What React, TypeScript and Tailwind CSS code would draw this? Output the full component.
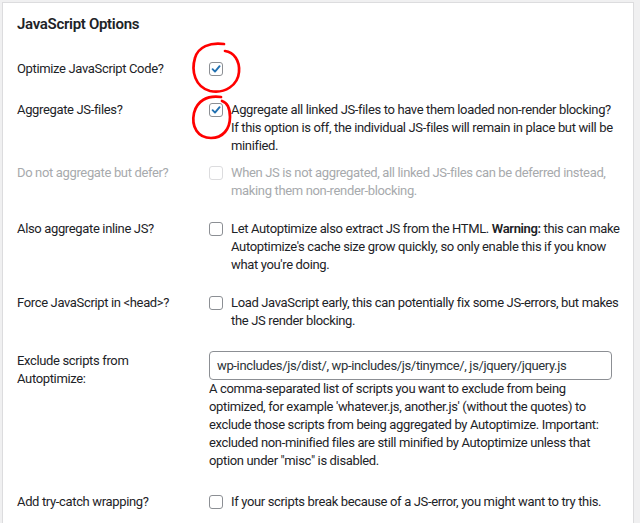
import React from "react";

function Box({ checked = false, disabled = false }: { checked?: boolean; disabled?: boolean }) {
  return (
    <span
      className={
        "mt-[2px] flex h-[14px] w-[14px] shrink-0 items-center justify-center rounded-[3px] border bg-white " +
        (disabled ? "border-[#dcdcde]" : "border-[#8c8f94]")
      }
    >
      {checked && (
        <svg width="10" height="10" viewBox="0 0 10 10">
          <path d="M1.6 5.2 L4 7.6 L8.6 2.2" fill="none" stroke="#2271b1" strokeWidth="1.9" strokeLinecap="round" strokeLinejoin="round" />
        </svg>
      )}
    </span>
  );
}

function Lines({ lines }: { lines: React.ReactNode[] }) {
  return (
    <div className="whitespace-nowrap">
      {lines.map((l, i) => (
        <div key={i}>{l}</div>
      ))}
    </div>
  );
}

export default function App() {
  return (
    <div className="relative h-[523px] w-[640px] overflow-hidden bg-[#f0f0f1] pl-[2px] pr-[6px] pt-[2px] font-['Roboto',sans-serif] text-[13px] leading-[18px] tracking-[-0.35px] text-[#1d2327]">
      <div className="h-[540px] border border-[#dcdcde] bg-white pl-[14px]">
        <h2 className="pt-[11px] text-[15px] font-semibold leading-[20px] tracking-[-0.3px]">JavaScript Options</h2>

        <div className="mt-[26px] flex">
          <div className="w-[192px] shrink-0">Optimize JavaScript Code?</div>
          <Box checked />
        </div>

        <div className="mt-[23px] flex">
          <div className="w-[192px] shrink-0">Aggregate JS-files?</div>
          <div className="flex gap-[8px]">
            <Box checked />
            <Lines
              lines={[
                "Aggregate all linked JS-files to have them loaded non-render blocking?",
                "If this option is off, the individual JS-files will remain in place but will be",
                "minified.",
              ]}
            />
          </div>
        </div>

        <div className="mt-[9px] flex text-[#a7aaad]">
          <div className="w-[192px] shrink-0">Do not aggregate but defer?</div>
          <div className="flex gap-[8px]">
            <Box disabled />
            <Lines
              lines={[
                "When JS is not aggregated, all linked JS-files can be deferred instead,",
                "making them non-render-blocking.",
              ]}
            />
          </div>
        </div>

        <div className="mt-[20px] flex">
          <div className="w-[192px] shrink-0">Also aggregate inline JS?</div>
          <div className="flex gap-[8px]">
            <Box />
            <Lines
              lines={[
                <>
                  Let Autoptimize also extract JS from the HTML. <span className="font-semibold">Warning:</span> this can make
                </>,
                "Autoptimize's cache size grow quickly, so only enable this if you know",
                "what you're doing.",
              ]}
            />
          </div>
        </div>

        <div className="mt-[20px] flex">
          <div className="w-[192px] shrink-0">Force JavaScript in &lt;head&gt;?</div>
          <div className="flex gap-[8px]">
            <Box />
            <Lines
              lines={[
                "Load JavaScript early, this can potentially fix some JS-errors, but makes",
                "the JS render blocking.",
              ]}
            />
          </div>
        </div>

        <div className="mt-[21px] flex">
          <div className="w-[192px] shrink-0 pt-[1px]">
            <div>Exclude scripts from</div>
            <div>Autoptimize:</div>
          </div>
          <div className="w-[403px] shrink-0">
            <div className="flex h-[29px] items-center rounded-[4px] border border-[#8c8f94] px-[7px] text-[#2c3338]">
              wp-includes/js/dist/, wp-includes/js/tinymce/, js/jquery/jquery.js
            </div>
            <Lines
              lines={[
                "A comma-separated list of scripts you want to exclude from being",
                "optimized, for example 'whatever.js, another.js' (without the quotes) to",
                "exclude those scripts from being aggregated by Autoptimize. Important:",
                "excluded non-minified files are still minified by Autoptimize unless that",
                'option under "misc" is disabled.',
              ]}
            />
          </div>
        </div>

        <div className="mt-[23px] flex">
          <div className="w-[192px] shrink-0">Add try-catch wrapping?</div>
          <div className="flex gap-[8px]">
            <Box />
            <Lines lines={["If your scripts break because of a JS-error, you might want to try this."]} />
          </div>
        </div>
      </div>

      <svg className="pointer-events-none absolute left-0 top-0" width="640" height="523" viewBox="0 0 640 523">
        <path
          d="M224 44 C210 42, 198 47, 195 58 C191 71, 195 87, 210 91 C225 94, 238 85, 239 72 C240 61, 234 52, 225 51"
          fill="none"
          stroke="#ff0000"
          strokeWidth="2.7"
          strokeLinecap="round"
        />
        <path
          d="M221 97 C207 95, 197 101, 194 113 C191 127, 198 138, 211 138 C223 138, 230 129, 230 117 C230 108, 228 103, 222 101"
          fill="none"
          stroke="#ff0000"
          strokeWidth="2.7"
          strokeLinecap="round"
        />
      </svg>
    </div>
  );
}
